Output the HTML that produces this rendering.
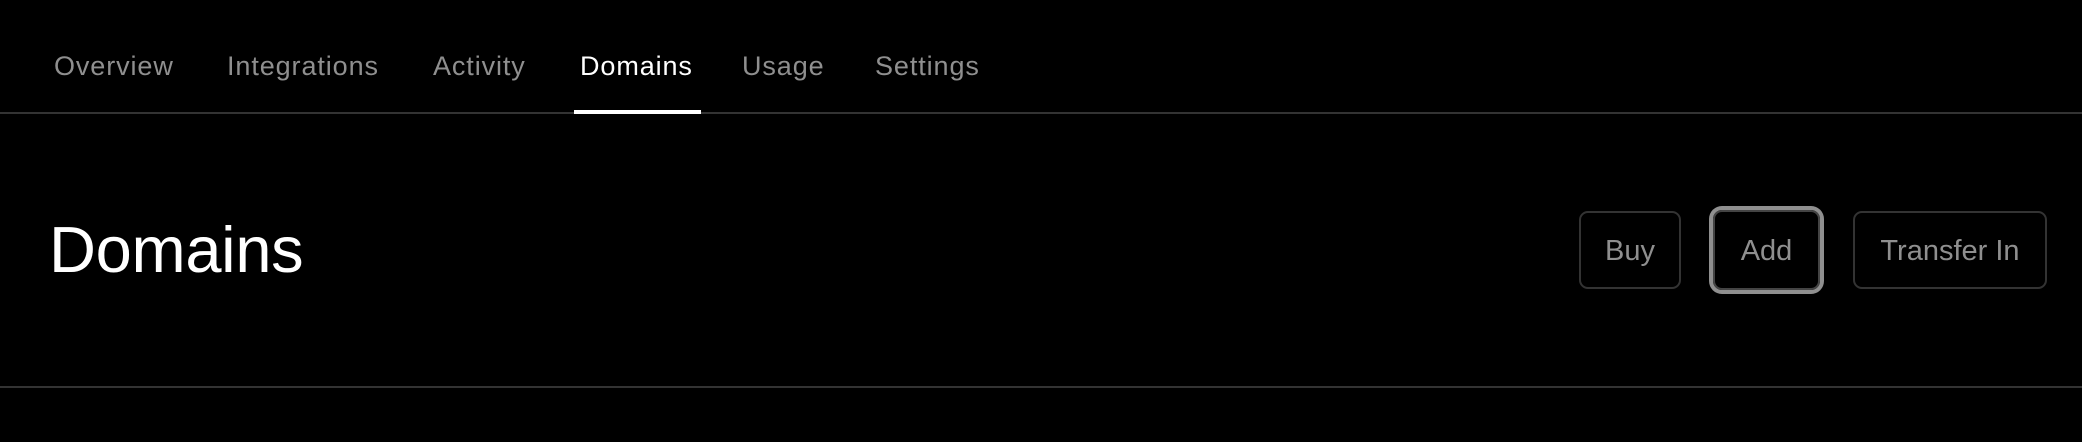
<!DOCTYPE html>
<html><head><style>
html,body{margin:0;padding:0;background:#000;width:2082px;height:442px;overflow:hidden;font-family:"Liberation Sans",sans-serif}
.nav{position:absolute;top:51px;font-size:27px;letter-spacing:0.9px;color:#8f8f8f;white-space:nowrap}
.line{position:absolute;left:0;width:2082px;height:2px;background:#333}
.ul{position:absolute;left:574px;top:110px;width:127px;height:4px;background:#fff}
h1{position:absolute;left:49px;top:212px;margin:0;font-size:65px;font-weight:normal;color:#fff;letter-spacing:-0.3px}
.btn{position:absolute;top:211px;height:78px;box-sizing:border-box;border:2px solid #333;border-radius:9px;color:#8f8f8f;font-size:29px;display:flex;align-items:center;justify-content:center;padding-top:2px}
</style></head><body>
<div class="nav" style="left:54px">Overview</div>
<div class="nav" style="left:227px">Integrations</div>
<div class="nav" style="left:433px">Activity</div>
<div class="nav" style="left:580px;color:#fff">Domains</div>
<div class="nav" style="left:742px">Usage</div>
<div class="nav" style="left:875px">Settings</div>
<div class="line" style="top:112px"></div>
<div class="ul"></div>
<h1>Domains</h1>
<div class="btn" style="left:1579px;width:102px">Buy</div>
<div class="btn" style="left:1713px;width:107px;top:210px;height:80px;box-shadow:0 0 0 4px #8f8f8f;border-color:#444">Add</div>
<div class="btn" style="left:1853px;width:194px">Transfer In</div>
<div class="line" style="top:386px"></div>
</body></html>
